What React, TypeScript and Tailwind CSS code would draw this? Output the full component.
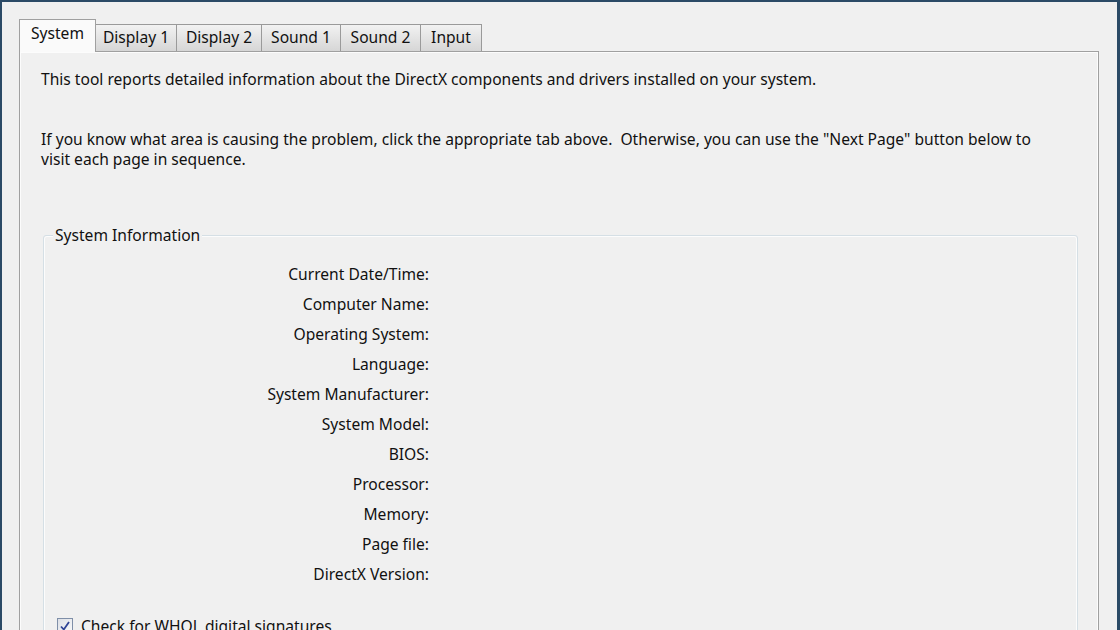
import React from "react";

const tabs = ["System", "Display 1", "Display 2", "Sound 1", "Sound 2", "Input"];
const tabWidths = ["w-[77px]", "w-[82px]", "w-[86px]", "w-[80px]", "w-[81px]", "w-[62px]"];

const labels = [
  "Current Date/Time:",
  "Computer Name:",
  "Operating System:",
  "Language:",
  "System Manufacturer:",
  "System Model:",
  "BIOS:",
  "Processor:",
  "Memory:",
  "Page file:",
  "DirectX Version:",
];

export default function App() {
  return (
    <div
      className="w-[1120px] h-[630px] overflow-hidden bg-[#f0f0f0] border-l-2 border-t-2 border-r-[3px] border-[#2b4a66] pl-[17px] pr-[18px] pt-[16px] text-[15.6px] text-[#111]"
      style={{ fontFamily: '"Noto Sans", "Open Sans", sans-serif' }}
    >
      <div className="flex items-end h-[33px]">
        {tabs.map((t, i) =>
          i === 0 ? (
            <div
              key={t}
              className={`${tabWidths[i]} h-[33px] -mb-px relative z-10 border border-b-0 border-[#a0a0a0] bg-[#fafafa] flex items-start justify-center pt-[3px] leading-[20px]`}
            >
              {t}
            </div>
          ) : (
            <div
              key={t}
              className={`${tabWidths[i]} h-[27px] -ml-px border border-b-0 border-[#9a9a9a] bg-gradient-to-b from-[#f2f2f2] to-[#d6d6d6] flex items-start justify-center pt-[2px] leading-[20px]`}
            >
              {t}
            </div>
          )
        )}
      </div>
      <div className="border border-[#a0a0a0] h-[700px] bg-[#f0f0f0]">
        <div className="border border-[#fcfcfc] h-full pl-[20px] pr-[20px] pt-[16px]">
          <p className="leading-[20px]">
            This tool reports detailed information about the DirectX components and drivers installed on your system.
          </p>
          <p className="leading-[20px] mt-[40px] pr-[36px]">
            If you know what area is causing the problem, click the appropriate tab above.&nbsp; Otherwise, you can use the "Next Page" button below to visit each page in sequence.
          </p>
          <div className="relative mt-[66px] ml-[2px] mr-[-1px] border border-[#d5dfe5] rounded-[3px] h-[500px]">
            <div className="absolute inset-0 border border-[#fcfcfc] rounded-[3px]" />
            <div className="absolute -top-[11px] left-[9px] px-[2px] bg-[#f0f0f0] leading-[20px]">
              System Information
            </div>
            <div className="relative pt-[23px]">
              {labels.map((l) => (
                <div key={l} className="flex h-[30px] items-center">
                  <div className="w-[385px] text-right leading-[20px]">{l}</div>
                </div>
              ))}
              <div className="flex items-center gap-[8px] mt-[27px] ml-[13px] h-[20px]">
                <div className="w-[16px] h-[16px] border border-[#7f8fa8] bg-gradient-to-br from-[#dcdfe6] to-[#fafafa] flex items-center justify-center">
                  <svg width="12" height="12" viewBox="0 0 12 12">
                    <path d="M2 6.5 L4.8 9.5 L10 2" stroke="#2f4496" strokeWidth="1.8" fill="none" />
                  </svg>
                </div>
                <span className="leading-[20px]">Check for WHQL digital signatures</span>
              </div>
            </div>
          </div>
        </div>
      </div>
    </div>
  );
}
